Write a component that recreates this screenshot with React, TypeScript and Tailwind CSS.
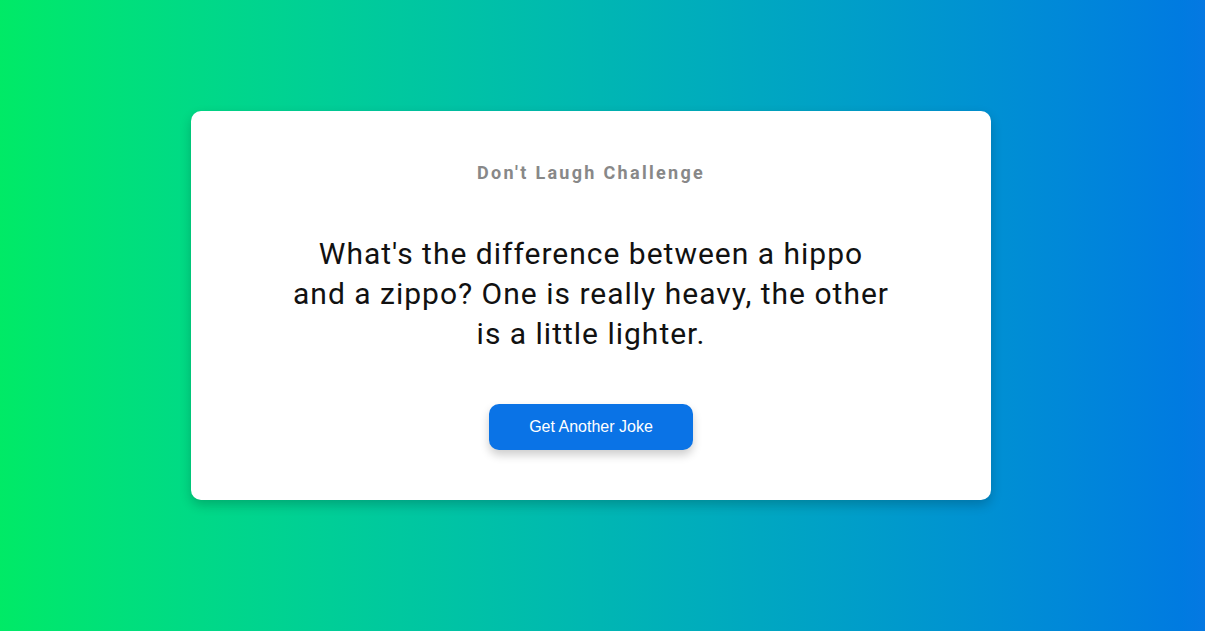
export default function App() {
  return (
    <div className="min-h-[631px] w-full flex items-center justify-center pb-[20px] pr-[23px] bg-gradient-to-r from-[#00ea66] to-[#0578e2]">
      <div className="w-[800px] bg-white rounded-[10px] shadow-[0_5px_12px_rgba(0,0,0,0.2)] px-[100px] pt-[48px] pb-[50px] flex flex-col items-center text-center">
        <h3 className="font-['Roboto',sans-serif] font-bold text-[18px] leading-[27px] tracking-[2.3px] text-[#888]">
          Don't Laugh Challenge
        </h3>
        <p className="mt-[48px] font-['Roboto',sans-serif] text-[30px] leading-[40px] tracking-[1px] text-[#111]">
          What's the difference between a hippo and a zippo? One is really heavy, the other is a little lighter.
        </p>
        <button className="mt-[50px] w-[204px] h-[46px] rounded-[10px] bg-[#0a73e6] text-white font-['Liberation_Sans',Arial,sans-serif] text-[16px] shadow-[0_5px_10px_rgba(0,0,0,0.2)]">
          Get Another Joke
        </button>
      </div>
    </div>
  );
}
